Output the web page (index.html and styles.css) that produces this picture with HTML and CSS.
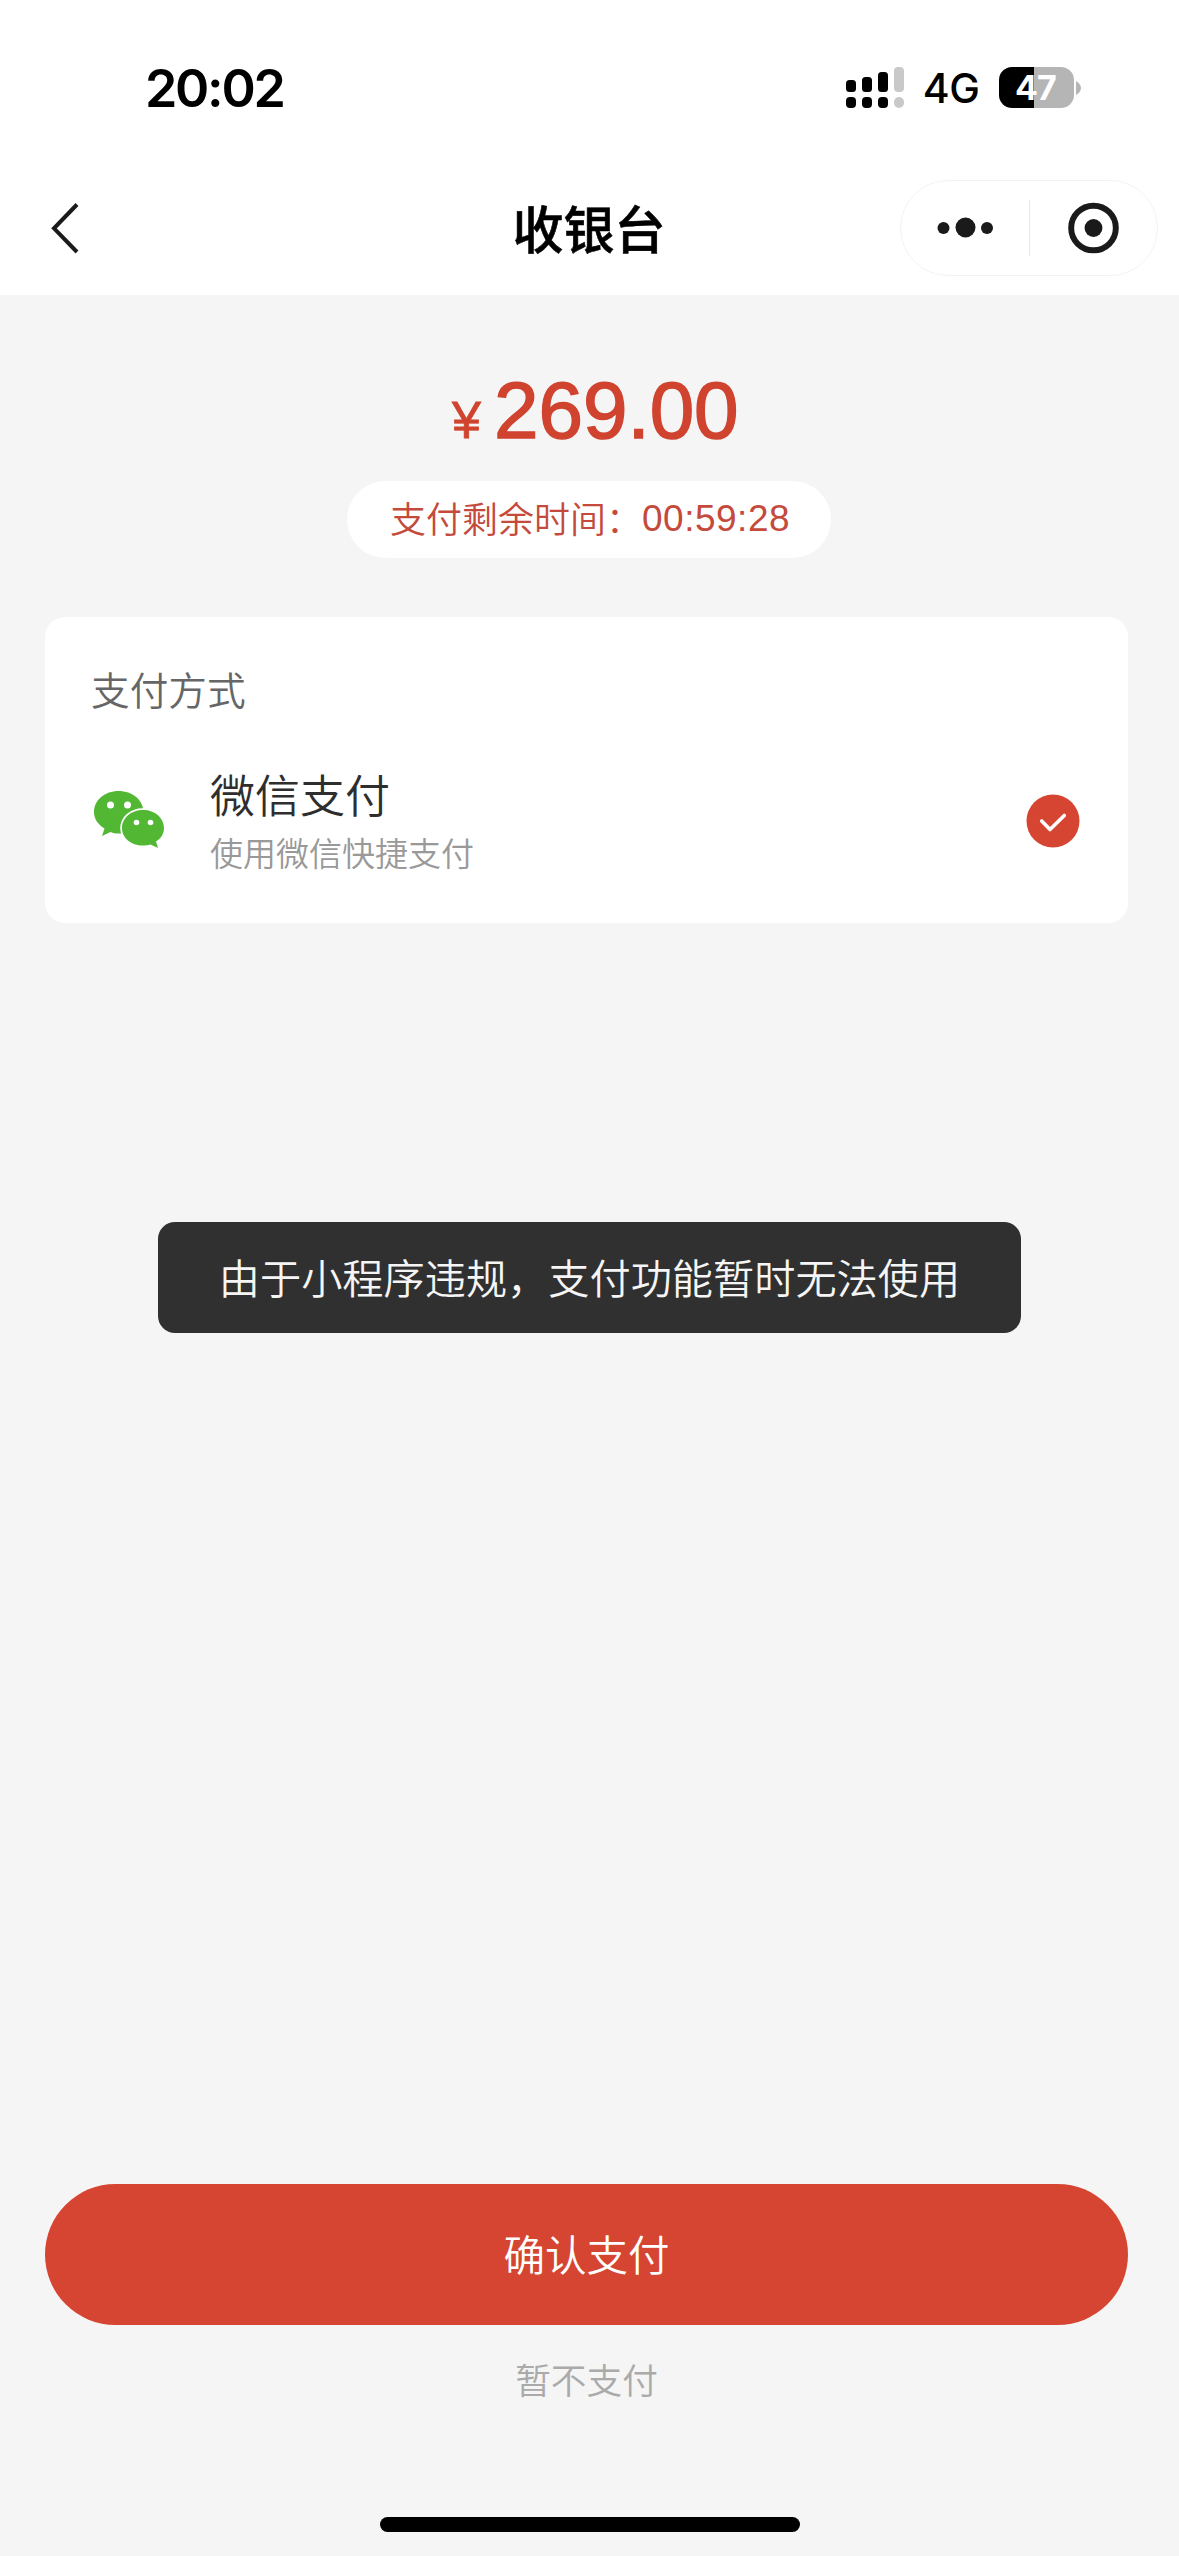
FILE: index.html
```html
<!DOCTYPE html>
<html lang="zh-CN">
<head>
<meta charset="UTF-8">
<title>收银台</title>
<link rel="stylesheet" href="styles.css">
</head>
<body>
<div class="screen">
  <header class="top">
    <div class="status">
      <time class="clock">20:02</time>
      <div class="indicators">
        <svg class="signal" width="60" height="42" viewBox="0 0 60 42">
          <g fill="#000">
            <rect x="1" y="13" width="10" height="12" rx="3.5"/>
            <rect x="17" y="10" width="10" height="15" rx="3.5"/>
            <rect x="33" y="5" width="10" height="20" rx="3.5"/>
            <rect x="1" y="30" width="10" height="11" rx="4"/>
            <rect x="17" y="30" width="10" height="11" rx="4"/>
            <rect x="33" y="30" width="10" height="11" rx="4"/>
          </g>
          <g fill="#c9c9c9">
            <rect x="49" y="0" width="10" height="25" rx="4"/>
            <rect x="49" y="30" width="10" height="11" rx="5"/>
          </g>
        </svg>
        <span class="network">4G</span>
        <div class="battery"><span class="level">47</span></div>
        <svg class="nub" width="5" height="14" viewBox="0 0 5 14"><path d="M0 0C3 2 5 4 5 7S3 12 0 14Z" fill="#b5b5b5"/></svg>
      </div>
    </div>
    <nav class="nav">
      <svg class="back" width="32" height="54" viewBox="0 0 32 54"><path d="M30 3.500L7 27.300L30 51" fill="none" stroke="#1a1a1a" stroke-width="4"/></svg>
      <h1 class="title">收银台</h1>
      <div class="capsule">
        <svg class="more" width="128" height="56" viewBox="0 0 128 56" fill="#1a1a1a"><circle cx="42.500" cy="28" r="6"/><circle cx="64.500" cy="27.500" r="10"/><circle cx="86" cy="28" r="6"/></svg>
        <svg class="close" width="127" height="56" viewBox="0 0 127 56"><circle cx="64" cy="28" r="22.500" fill="none" stroke="#1a1a1a" stroke-width="6"/><circle cx="64" cy="28" r="9" fill="#1a1a1a"/></svg>
      </div>
    </nav>
  </header>

  <main class="content">
    <div class="price"><span class="currency">¥</span><span class="amount">269.00</span></div>
    <div class="countdown">支付剩余时间：<span class="timer">00:59:28</span></div>
    <section class="card">
      <h2 class="card-title">支付方式</h2>
      <div class="method">
        <svg class="wechat" width="72" height="60" viewBox="0 0 72 60">
          <g fill="#52b834">
            <path d="M25.500 1C39.500 1 50.500 10 50.500 22.500S39.500 43.500 25.500 43.500C22.500 43.500 20 43 17.500 42L9 46L11.500 38.500C5 34.500 1 29 1 22C1 10 12 1 25.500 1Z"/>
            <path d="M50 20C62 20 71 28 71 38C71 44 68 48.500 63 51.500L65 58L57.500 54.500C55 55.300 52.500 55.500 50 55.500C38 55.500 29 48 29 38S38 20 50 20Z" stroke="#fff" stroke-width="3.600" paint-order="stroke"/>
          </g>
          <g fill="#fff"><circle cx="17.500" cy="15" r="3.500"/><circle cx="34.500" cy="15" r="3.500"/><circle cx="43.500" cy="32.500" r="2.800"/><circle cx="57.500" cy="32.500" r="2.800"/></g>
        </svg>
        <div class="labels">
          <div class="name">微信支付</div>
          <div class="hint">使用微信快捷支付</div>
        </div>
        <svg class="check" width="54" height="54" viewBox="0 0 54 54"><circle cx="27" cy="27" r="26.500" fill="#d64532"/><path d="M15.700 27L24 35.500L38.300 21.500" fill="none" stroke="#fff" stroke-width="3.600" stroke-linecap="round" stroke-linejoin="round"/></svg>
      </div>
    </section>
  </main>

  <footer class="actions">
    <button class="confirm">确认支付</button>
    <a class="later">暂不支付</a>
    <div class="home"></div>
  </footer>

  <div class="toast">由于小程序违规，支付功能暂时无法使用</div>
</div>
</body>
</html>
```
FILE: styles.css
```css
* { box-sizing: border-box; }
body { margin: 0; font-family: "Liberation Sans", "Noto Sans CJK SC", sans-serif; }
.screen {
  position: relative;
  display: flex;
  flex-direction: column;
  width: 1179px;
  height: 2556px;
  background: #f5f5f5;
  overflow: hidden;
}
.top { height: 295px; background: #fff; }
.status {
  display: flex;
  justify-content: space-between;
  align-items: center;
  height: 175px;
  padding: 0 98px 0 145px;
}
.clock { padding-top: 2px; font: 600 52px/60px Inter, sans-serif; letter-spacing: -2.300px; color: #000; }
.indicators { display: flex; align-items: center; }
.network { width: 58px; margin: 0 19px 0 17px; padding-top: 1px; font: 500 41px/50px Inter, sans-serif; letter-spacing: -0.500px; text-align: center; }
.battery {
  width: 75px;
  height: 41px;
  border-radius: 13px;
  background: linear-gradient(90deg, #000 35px, #b5b5b5 35px);
  text-align: center;
}
.level { margin-right: 2px; font: 700 34px/42px Inter, sans-serif; letter-spacing: -1px; color: #fff; }
.nub { margin-left: 2px; }
.nav {
  display: grid;
  grid-template-columns: 279px 1fr 279px;
  align-items: center;
  height: 105px;
}
.back { margin-left: 47px; }
.title { margin: 0; padding: 0 1px 2px 0; text-align: center; font: 500 51px/70px "Noto Sans CJK SC", sans-serif; color: #000; -webkit-text-stroke: 0.6px #000; }
.capsule {
  display: flex;
  align-items: center;
  width: 258px;
  height: 96px;
  border: 1px solid #f3f3f3;
  border-radius: 48px;
}
.close { border-left: 1px solid #e8e8e8; }
.content { display: flex; flex-direction: column; padding: 70px 51px 0 45px; }
.price { display: flex; align-items: baseline; gap: 13px; height: 116px; padding-left: 407px; line-height: 92px; color: #d0432f; }
.currency { font-size: 52px; -webkit-text-stroke: 0.8px #d0432f; }
.amount { font-size: 80px; -webkit-text-stroke: 1.500px #d0432f; }
.countdown {
  display: flex;
  width: 484px;
  height: 77px;
  margin-left: 302px;
  padding-left: 43px;
  border-radius: 39px;
  background: #fff;
  font: 350 36px/72px "Noto Sans CJK SC", sans-serif;
  color: #c44a3c;
}
.timer { font: 37px/76px "Liberation Sans", sans-serif; letter-spacing: 0.500px; }
.card { height: 306px; margin-top: 59px; padding: 43px 48px 0 46px; border-radius: 20px; background: #fff; }
.card-title { margin: 0; font: 350 38.700px/56px "Noto Sans CJK SC", sans-serif; color: #666; }
.method { display: flex; align-items: center; margin-top: 48px; }
.wechat { margin: -3px 0 0 2px; }
.labels { flex: 1; margin-left: 45px; }
.name { font: 350 45px/60px "Noto Sans CJK SC", sans-serif; color: #2e2e2e; }
.hint { padding-top: 1px; font: 350 33px/54px "Noto Sans CJK SC", sans-serif; color: #999; }
.check { margin-top: -1px; }
.actions { display: flex; flex-direction: column; align-items: center; margin-top: auto; padding: 0 51px 24px 45px; }
.confirm {
  width: 100%;
  height: 141px;
  padding: 0 0 3px;
  border: 0;
  border-radius: 71px;
  background: #d64532;
  color: #fff;
  font: 350 41.500px/60px "Noto Sans CJK SC", sans-serif;
}
.later { margin-top: 28px; font: 350 35.700px/52px "Noto Sans CJK SC", sans-serif; color: #aaa; }
.home { width: 420px; height: 15px; margin: 112px 0 0 7px; border-radius: 8px; background: #000; }
.toast {
  position: absolute;
  left: 158px;
  top: 1222px;
  width: 863px;
  height: 111px;
  border-radius: 17px;
  background: #303030;
  color: #f5f5f5;
  text-align: center;
  font: 350 41.200px/108px "Noto Sans CJK SC", sans-serif;
}
```
